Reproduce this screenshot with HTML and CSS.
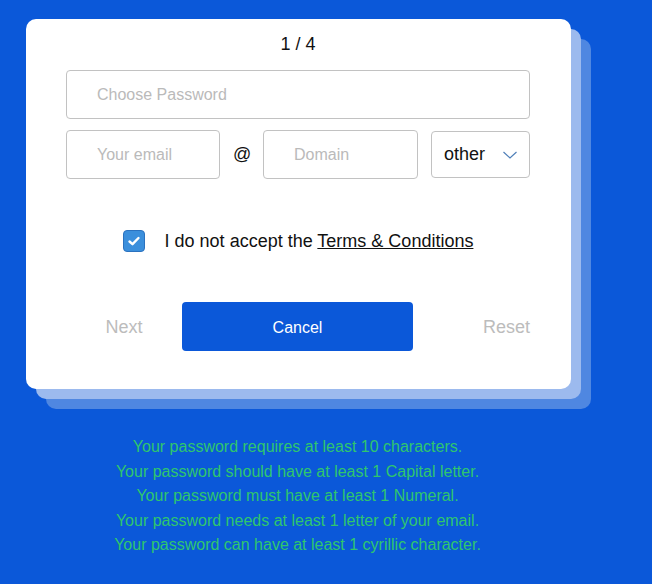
FILE: index.html
```html
<!DOCTYPE html>
<html lang="en">
<head>
<meta charset="utf-8">
<title>Password step</title>
<link rel="stylesheet" href="styles.css">
</head>
<body>
<div class="stage">
  <div class="card">
    <div class="step">1 / 4</div>
    <input class="field field-full" type="password" placeholder="Choose Password">
    <div class="email-row">
      <input class="field field-half" type="text" placeholder="Your email">
      <span class="at">@</span>
      <input class="field field-domain" type="text" placeholder="Domain">
      <div class="select">
        <span>other</span>
        <svg class="chev" width="16" height="10" viewBox="0 0 16 10"><polyline points="1.5,2 8,8 14.5,2" fill="none" stroke="#4f7fb8" stroke-width="1.2"/></svg>
      </div>
    </div>
    <div class="terms">
      <span class="check">
        <svg width="14" height="12" viewBox="0 0 14 12"><polyline points="2.5,6.5 5.5,9.2 11.5,3" fill="none" stroke="#fff" stroke-width="2.4" stroke-linecap="round" stroke-linejoin="round"/></svg>
      </span>
      <span class="terms-text">I do not accept the <a class="link" href="#">Terms &amp; Conditions</a></span>
    </div>
    <div class="actions">
      <span class="ghost ghost-left">Next</span>
      <button class="primary" type="button">Cancel</button>
      <span class="ghost ghost-right">Reset</span>
    </div>
  </div>
  <div class="rules">
    <p>Your password requires at least 10 characters.</p>
    <p>Your password should have at least 1 Capital letter.</p>
    <p>Your password must have at least 1 Numeral.</p>
    <p>Your password needs at least 1 letter of your email.</p>
    <p>Your password can have at least 1 cyrillic character.</p>
  </div>
</div>
</body>
</html>
```

FILE: styles.css
```css
html, body {
  margin: 0;
  padding: 0;
}
body {
  background: #0b58d9;
  font-family: "Liberation Sans", Arial, sans-serif;
  width: 652px;
  height: 584px;
  overflow: hidden;
}
.stage {
  padding: 19px 0 0 26px;
}
.card {
  width: 545px;
  height: 370px;
  box-sizing: border-box;
  background: #fff;
  border-radius: 10px;
  box-shadow: 10px 10px 0 #9cbaee, 20px 20px 0 #4f87e1;
  padding: 15px 41px 0 40px;
}
.step {
  text-align: center;
  font-size: 18px;
  line-height: 20px;
  color: #111;
}
.field {
  display: block;
  box-sizing: border-box;
  height: 49px;
  border: 1px solid #c2c2c2;
  border-radius: 4px;
  padding: 0 0 0 30px;
  font-family: "Liberation Sans", Arial, sans-serif;
  font-size: 16px;
  color: #111;
  background: #fff;
  outline: none;
  margin: 0;
}
.field::placeholder {
  color: #bababa;
}
.field-full {
  width: 100%;
  margin-top: 16px;
}
.email-row {
  display: flex;
  align-items: center;
  margin-top: 11px;
  height: 49px;
}
.field-half {
  width: 154px;
}
.field-domain {
  width: 155px;
}
.at {
  font-size: 18px;
  width: 18px;
  margin: 0 12px 0 13px;
  color: #111;
}
.select {
  margin-left: auto;
  width: 99px;
  height: 47px;
  box-sizing: border-box;
  border: 1px solid #c2c2c2;
  border-radius: 4px;
  display: flex;
  align-items: center;
  justify-content: space-between;
  padding: 0 11px 0 12px;
  font-size: 18px;
  color: #111;
}
.chev {
  display: block;
  margin-top: 1px;
}
.terms {
  margin-top: 51px;
  display: flex;
  align-items: center;
  justify-content: center;
  height: 22px;
}
.check {
  width: 22px;
  height: 22px;
  box-sizing: border-box;
  background: #3b8fdc;
  border: 1px solid #2b72bf;
  border-radius: 4px;
  display: flex;
  align-items: center;
  justify-content: center;
  margin-right: 20px;
}
.check svg {
  display: block;
}
.terms-text {
  font-size: 18px;
  color: #111;
  line-height: 20px;
}
.link {
  color: #111;
  text-decoration: underline;
}
.actions {
  margin-top: 50px;
  display: grid;
  grid-template-columns: 116px 231px 1fr;
  align-items: center;
  height: 49px;
}
.ghost {
  font-size: 18px;
  color: #bcbcbc;
  padding-top: 2px;
}
.ghost-left {
  text-align: center;
}
.ghost-right {
  text-align: right;
}
.primary {
  height: 49px;
  border: none;
  border-radius: 4px;
  background: #0b58d9;
  color: #fff;
  font-family: "Liberation Sans", Arial, sans-serif;
  font-size: 16px;
  padding: 3px 0 0;
  margin: 0;
}
.rules {
  width: 543px;
  margin-top: 46px;
  text-align: center;
  color: #2fc66d;
  font-size: 16px;
  line-height: 24.5px;
}
.rules p {
  margin: 0;
}
```
